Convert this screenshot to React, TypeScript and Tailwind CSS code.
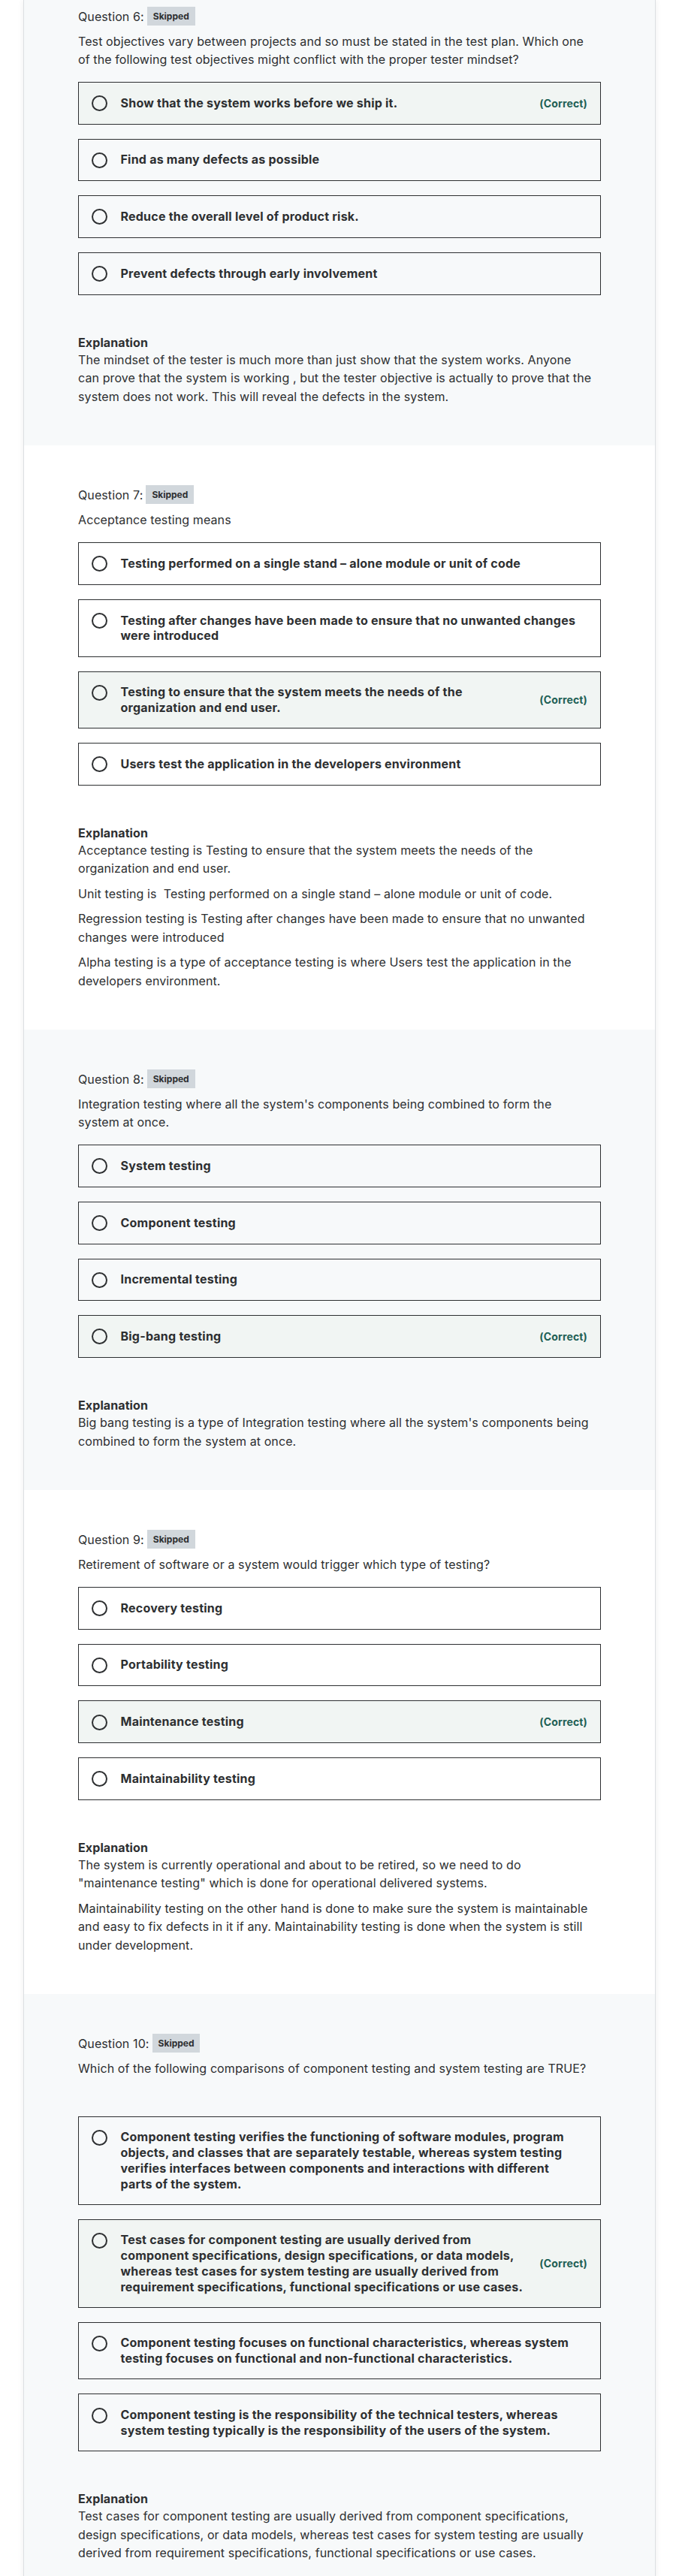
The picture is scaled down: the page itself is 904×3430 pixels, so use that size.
import React from 'react'

type Option = { text: string; correct?: boolean }
type Question = {
  num: number
  prompt: string[]
  options: Option[]
  explanation: string[]
}

// line breaks follow the original page's wrapping
const questions: Question[] = [
  {
    num: 6,
    prompt: [
      'Test objectives vary between projects and so must be stated in the test plan. Which one\nof the following test objectives might conflict with the proper tester mindset?',
    ],
    options: [
      { text: 'Show that the system works before we ship it.', correct: true },
      { text: 'Find as many defects as possible' },
      { text: 'Reduce the overall level of product risk.' },
      { text: 'Prevent defects through early involvement' },
    ],
    explanation: [
      'The mindset of the tester is much more than just show that the system works. Anyone\ncan prove that the system is working , but the tester objective is actually to prove that the\nsystem does not work. This will reveal the defects in the system.',
    ],
  },
  {
    num: 7,
    prompt: ['Acceptance testing means'],
    options: [
      { text: 'Testing performed on a single stand \u2013 alone module or unit of code' },
      { text: 'Testing after changes have been made to ensure that no unwanted changes\nwere introduced' },
      { text: 'Testing to ensure that the system meets the needs of the\norganization and end user.', correct: true },
      { text: 'Users test the application in the developers environment' },
    ],
    explanation: [
      'Acceptance testing is Testing to ensure that the system meets the needs of the\norganization and end user.',
      'Unit testing is  Testing performed on a single stand \u2013 alone module or unit of code.',
      'Regression testing is Testing after changes have been made to ensure that no unwanted\nchanges were introduced',
      'Alpha testing is a type of acceptance testing is where Users test the application in the\ndevelopers environment.',
    ],
  },
  {
    num: 8,
    prompt: ["Integration testing where all the system's components being combined to form the\nsystem at once."],
    options: [
      { text: 'System testing' },
      { text: 'Component testing' },
      { text: 'Incremental testing' },
      { text: 'Big-bang testing', correct: true },
    ],
    explanation: [
      "Big bang testing is a type of Integration testing where all the system's components being\ncombined to form the system at once.",
    ],
  },
  {
    num: 9,
    prompt: ['Retirement of software or a system would trigger which type of testing?'],
    options: [
      { text: 'Recovery testing' },
      { text: 'Portability testing' },
      { text: 'Maintenance testing', correct: true },
      { text: 'Maintainability testing' },
    ],
    explanation: [
      'The system is currently operational and about to be retired, so we need to do\n"maintenance testing" which is done for operational delivered systems.',
      'Maintainability testing on the other hand is done to make sure the system is maintainable\nand easy to fix defects in it if any. Maintainability testing is done when the system is still\nunder development.',
    ],
  },
  {
    num: 10,
    prompt: ['Which of the following comparisons of component testing and system testing are TRUE?', ''],
    options: [
      {
        text: 'Component testing verifies the functioning of software modules, program\nobjects, and classes that are separately testable, whereas system testing\nverifies interfaces between components and interactions with different\nparts of the system.',
      },
      {
        text: 'Test cases for component testing are usually derived from\ncomponent specifications, design specifications, or data models,\nwhereas test cases for system testing are usually derived from\nrequirement specifications, functional specifications or use cases.',
        correct: true,
      },
      {
        text: 'Component testing focuses on functional characteristics, whereas system\ntesting focuses on functional and non-functional characteristics.',
      },
      {
        text: 'Component testing is the responsibility of the technical testers, whereas\nsystem testing typically is the responsibility of the users of the system.',
      },
    ],
    explanation: [
      'Test cases for component testing are usually derived from component specifications,\ndesign specifications, or data models, whereas test cases for system testing are usually\nderived from requirement specifications, functional specifications or use cases.',
    ],
  },
]

function AnswerRow({ option }: { option: Option }) {
  return (
    <div
      className={`flex items-start border border-[#2d2f31] pl-[16.5px] pr-[17px] py-[16.6px] ${
        option.correct ? 'bg-[#f1f5f3]' : ''
      }`}
    >
      <span className="mt-[0.5px] h-[21px] w-[21px] shrink-0 rounded-full border-2 border-[#2d2f31]" />
      <div className="ml-[18px] flex-1 whitespace-pre text-[16px] font-bold leading-[20.7px] tracking-[0.22px] text-[#2d2f31]">
        {option.text}
      </div>
      {option.correct && (
        <span className="ml-4 self-center text-[14px] font-bold leading-[21px] tracking-[0.15px] text-[#1e6055]">
          (Correct)
        </span>
      )}
    </div>
  )
}

function QuestionBlock({ q, index }: { q: Question; index: number }) {
  const first = index === 0
  const last = index === questions.length - 1
  return (
    <section
      className={`px-[72px] ${index % 2 === 0 ? 'bg-[#f7f9fa]' : 'bg-white'} ${first ? 'pt-[9px]' : 'pt-[53px]'} ${
        last ? 'pb-[24px]' : 'pb-[53px]'
      }`}
    >
      {/* Header */}
      <div className="flex h-[25px] items-center gap-[4px]">
        <span className="text-[16px] tracking-[0.1px] text-[#2d2f31]">Question {q.num}:</span>
        <span className="flex h-[25px] items-center bg-[#d1d7dc] px-2 text-[12px] font-bold text-[#2d2f31]">
          Skipped
        </span>
      </div>

      {/* Prompt */}
      <div className="mt-[8.5px] space-y-[9.5px] text-[16px] leading-[24px] tracking-[0.1px] text-[#2d2f31]">
        {q.prompt.map((p, i) => (
          <p key={i} className="min-h-[24px] whitespace-pre">
            {p}
          </p>
        ))}
      </div>

      {/* Answers */}
      <div className="mt-[18.5px] flex flex-col gap-[19px]">
        {q.options.map((o, i) => (
          <AnswerRow key={i} option={o} />
        ))}
      </div>

      {/* Explanation */}
      <div className="mt-[52px] text-[#2d2f31]">
        <div className="text-[16px] font-bold leading-[22px] tracking-[0.1px]">Explanation</div>
        <div className="space-y-[9px] text-[16px] leading-[24.5px] tracking-[0.1px]">
          {q.explanation.map((p, i) => (
            <p key={i} className="whitespace-pre">
              {p}
            </p>
          ))}
        </div>
      </div>
    </section>
  )
}

export default function App() {
  return (
    <div className="min-h-screen bg-white" style={{ fontFamily: 'Inter, "Liberation Sans", sans-serif' }}>
      <div className="mx-auto w-[842px] border-x border-[#dcdfe2] shadow-[0_0_8px_rgba(0,0,0,0.07)]">
        {questions.map((q, i) => (
          <QuestionBlock key={q.num} q={q} index={i} />
        ))}
      </div>
    </div>
  )
}
